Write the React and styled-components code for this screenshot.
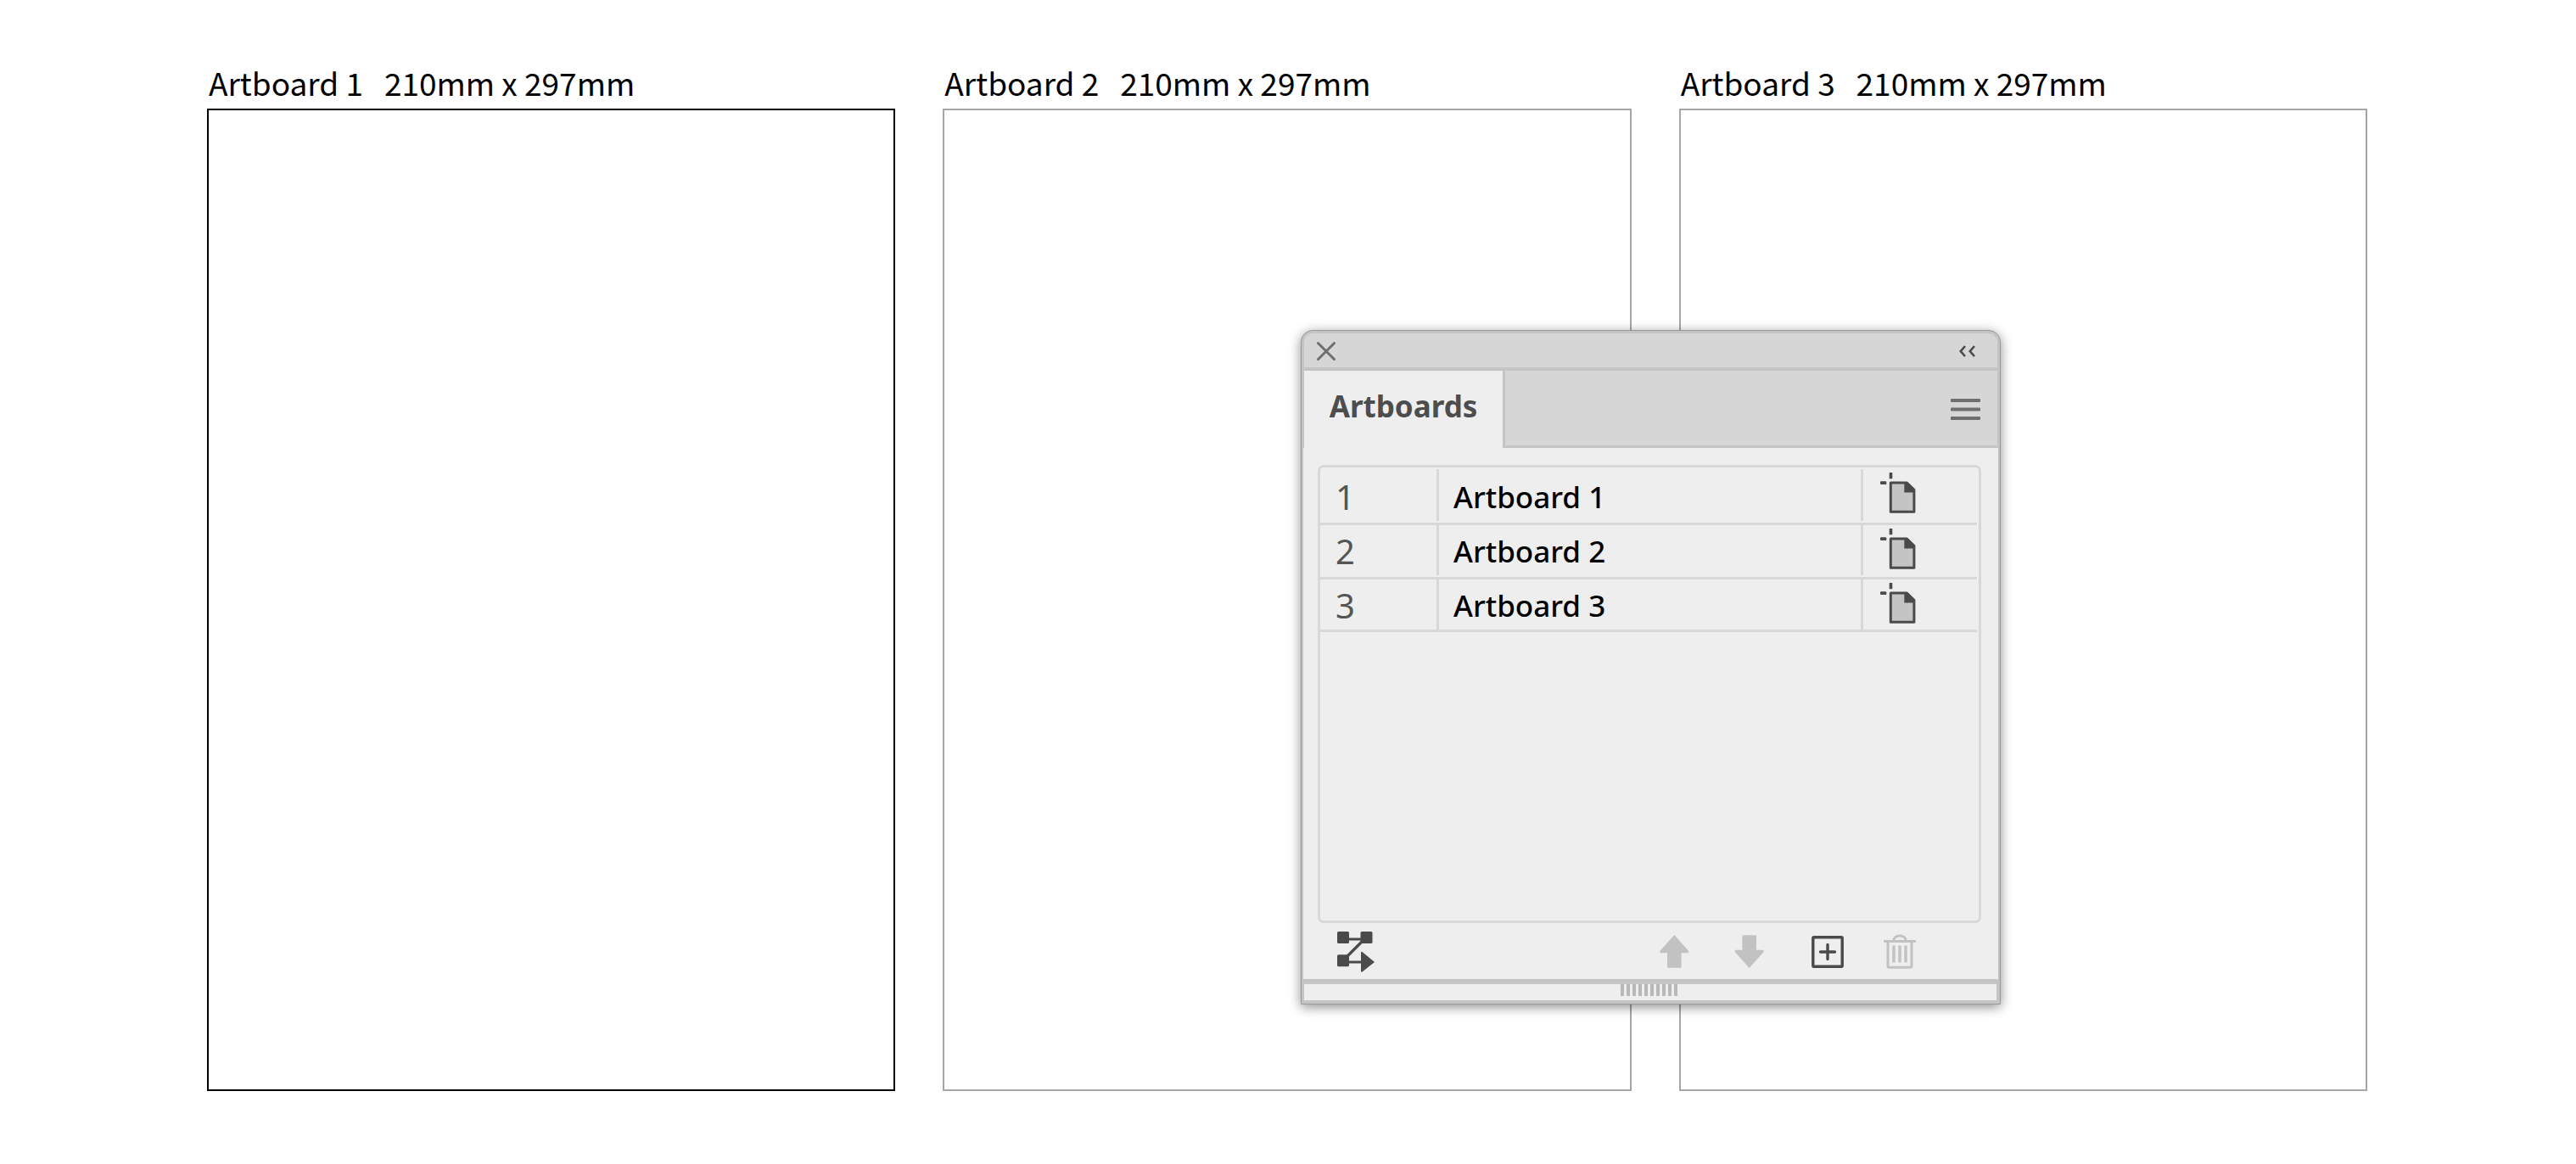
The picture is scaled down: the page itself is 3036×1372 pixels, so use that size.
import React from "react";
import styled, { createGlobalStyle, css } from "styled-components";

const GlobalStyle = createGlobalStyle`
  *, *::before, *::after { box-sizing: border-box; }
  body { margin: 0; background: #fff; }
`;

const labelFont = css`font-family: "Noto Sans CJK JP", "Noto Sans", sans-serif;`;
const uiFont = css`font-family: "Noto Sans", "Open Sans", sans-serif;`;

const Workspace = styled.main`
  position: relative;
  min-height: 100vh;
  padding: 72px 246px 0 244px;
`;

const Boards = styled.div`
  display: grid;
  grid-template-columns: repeat(3, 1fr);
  gap: 56px;
`;

const Board = styled.section`
  display: flex;
  flex-direction: column;
`;

const BoardLabel = styled.h2`
  ${labelFont}
  margin: 0;
  padding-left: 2px;
  height: 56px;
  font-size: 37px;
  font-weight: 400;
  line-height: 50px;
  color: #000;
  white-space: pre;
`;

const Sheet = styled.div`
  aspect-ratio: 811 / 1158;
  border: ${(p) => (p.$active ? "2px solid #000" : "2px solid #a6a6a6")};
`;

const Panel = styled.aside`
  ${uiFont}
  position: absolute;
  top: 389px;
  left: 1533px;
  width: 825px;
  display: flex;
  flex-direction: column;
  background: #c4c4c4;
  border: 1px solid #999;
  border-radius: 14px 14px 0 0;
  box-shadow: 0 3px 14px rgba(0, 0, 0, 0.45);
`;

const TitleBar = styled.header`
  display: flex;
  align-items: center;
  justify-content: space-between;
  height: 40px;
  margin: 3px 3px 4px;
  padding: 1px 26px 0 15px;
  background: #d6d6d6;
  border-radius: 10px 10px 0 0;
`;

const IconButton = styled.button`
  display: flex;
  padding: 0;
  border: 0;
  background: none;
  color: ${(p) => p.$color || "#4a4a4a"};
  svg { display: block; }
`;

const TabRow = styled.div`
  display: flex;
  height: 91px;
  margin: 0 3px;
  background: #d6d6d6;
`;

const Tab = styled.button`
  ${uiFont}
  width: 237px;
  padding: 0 0 8px;
  border: 0;
  border-right: 3px solid #c4c4c4;
  background: #eee;
  color: #4d4d4d;
  font-size: 35px;
  font-weight: 700;
  line-height: 46px;
`;

const TabSpace = styled.div`
  flex: 1;
  display: flex;
  align-items: center;
  justify-content: flex-end;
  padding: 2px 20px 0 0;
  border-bottom: 3px solid #c4c4c4;
`;

const Body = styled.div`
  margin: 0 2px;
  padding: 20px 20px 0 17px;
  background: #eee;
`;

const ListBox = styled.div`
  height: 540px;
  padding: 2px 2px 0 0;
  border: 3px solid #d8d8d8;
  border-radius: 7px;
`;

const List = styled.table`
  width: 100%;
  table-layout: fixed;
  border-collapse: collapse;
`;

const Row = styled.tr`
  height: ${(p) => p.$height}px;
  line-height: ${(p) => p.$line}px;
  background: linear-gradient(#d8d8d8, #d8d8d8) bottom / 100% 3px no-repeat;
`;

const Cell = styled.td`
  padding: 0;
  vertical-align: top;
  font-size: 35px;
  color: #000;
  background: ${(p) =>
    p.$divided
      ? `linear-gradient(#d8d8d8, #d8d8d8) right top / 3px calc(100% - ${p.$stop}px) no-repeat`
      : "none"};
`;

const NumberCell = styled(Cell)`
  width: 140px;
  padding-left: 18px;
  font-size: 40px;
  color: #555;
`;

const NameCell = styled(Cell)`
  padding-left: 17px;
  font-weight: 500;
`;

const IconCell = styled(Cell)`
  width: 134px;
  padding: 4px 0 0 20px;
`;

const Toolbar = styled.footer`
  display: flex;
  align-items: center;
  height: 66px;
  padding: 1px 77px 0 23px;
`;

const Spacer = styled.div`
  flex: 1;
`;

const Tools = styled.div`
  display: flex;
  align-items: center;
  gap: 53px;
`;

const ToolsPair = styled(Tools)`
  gap: 47px;
  margin-left: 3px;
`;

const Grip = styled.div`
  display: flex;
  justify-content: center;
  gap: 3px;
  height: 19px;
  margin: 6px 4px 4px 3px;
  padding-right: 4px;
  background: #eee;
`;

const GripBar = styled.span`
  width: 4px;
  height: 14px;
  background: #b8b8b8;
`;

const CloseIcon = () => (
  <svg width="22" height="22" viewBox="0 0 22 22" fill="none" stroke="currentColor" strokeWidth="3" strokeLinecap="round">
    <path d="M1.5 1.5 20.5 20.5M20.5 1.5 1.5 20.5" />
  </svg>
);

const CollapseIcon = () => (
  <svg width="19" height="14" viewBox="0 0 19 14" fill="none" stroke="currentColor" strokeWidth="2.6">
    <path d="M7 1 1.8 7 7 13M18 1 12.8 7 18 13" />
  </svg>
);

const MenuIcon = () => (
  <svg width="35" height="25" viewBox="0 0 35 25" fill="currentColor">
    <rect width="35" height="4" rx="1" />
    <rect y="10.5" width="35" height="4" rx="1" />
    <rect y="21" width="35" height="4" rx="1" />
  </svg>
);

const ArtboardIcon = () => (
  <svg width="42" height="48" viewBox="0 0 42 48">
    <rect x="10.7" y="0" width="3.6" height="7.3" rx="0.6" fill="#4a4a4a" />
    <rect x="0" y="10.2" width="7.3" height="3.7" rx="1" fill="#4a4a4a" />
    <path d="M12.3 12h19l8.6 8.4v25.8H12.3z" fill="#c4c4c4" stroke="#4a4a4a" strokeWidth="3" strokeLinejoin="round" />
    <path d="M28.3 11v12.4H41v-3.5L31.8 11z" fill="#4a4a4a" />
  </svg>
);

const RearrangeIcon = () => (
  <svg width="45" height="48" viewBox="0 0 45 48" fill="currentColor">
    <path d="M10 9h24M32 9 8 33M10 36h22" stroke="currentColor" strokeWidth="3.2" />
    <rect width="14" height="14" rx="1.5" />
    <rect x="27.5" width="14" height="14" rx="1.5" />
    <rect y="27.3" width="14" height="14" rx="1.5" />
    <path d="M28 24.8q0-1.6 1.5-.8L44 36 29.5 47.6q-1.5.8-1.5-.8z" />
  </svg>
);

const ArrowIcon = ({ down }) => (
  <svg width="35" height="39" viewBox="0 0 35 39" fill="currentColor">
    <path
      d="M17.4 0 34 18.8q1.2 2.2-1 2.4H25.6V37.4q0 1.4-1.4 1.4H10.4Q9 38.8 9 37.4V21.2H1.6q-2.2-.2-1-2.4z"
      transform={down ? "rotate(180 17.5 19.5)" : undefined}
    />
  </svg>
);

const AddIcon = () => (
  <svg width="38" height="38" viewBox="0 0 38 38" fill="none" stroke="currentColor">
    <rect x="1.8" y="1.8" width="34.4" height="34.4" rx="1" strokeWidth="3.4" />
    <path d="M19 10.5v17M10.5 19h17" strokeWidth="3.4" strokeLinecap="round" />
  </svg>
);

const TrashIcon = () => (
  <svg width="38" height="41" viewBox="0 0 38 41" fill="none" stroke="currentColor" strokeWidth="3">
    <path d="M0 8.6h38M11.8 8c0-8 14.4-8 14.4 0M5 9v28.4q0 1.8 1.8 1.8h24.4q1.8 0 1.8-1.8V9" />
    <path d="M12 13.5v20M19 13.5v20M26 13.5v20" strokeWidth="3.4" />
  </svg>
);

const rows = [
  { id: 1, height: 66, line: 66, stop: 5 },
  { id: 2, height: 64, line: 62, stop: 5 },
  { id: 3, height: 62, line: 62, stop: 3 },
];

export default function App() {
  return (
    <>
      <GlobalStyle />
      <Workspace>
        <Boards>
          {rows.map(({ id }) => (
            <Board key={id}>
              <BoardLabel>{`Artboard ${id}   210mm x 297mm`}</BoardLabel>
              <Sheet $active={id === 1} />
            </Board>
          ))}
        </Boards>

        <Panel aria-label="Artboards panel">
          <TitleBar>
            <IconButton aria-label="Close" $color="#6e6e6e"><CloseIcon /></IconButton>
            <IconButton aria-label="Collapse"><CollapseIcon /></IconButton>
          </TitleBar>
          <TabRow>
            <Tab>Artboards</Tab>
            <TabSpace>
              <IconButton aria-label="Panel menu" $color="#6e6e6e"><MenuIcon /></IconButton>
            </TabSpace>
          </TabRow>
          <Body>
            <ListBox>
              <List>
                <tbody>
                  {rows.map(({ id, height, line, stop }) => (
                    <Row key={id} $height={height} $line={line}>
                      <NumberCell $divided $stop={stop}>{id}</NumberCell>
                      <NameCell $divided $stop={stop}>Artboard {id}</NameCell>
                      <IconCell>
                        <IconButton aria-label={`Artboard ${id} options`}><ArtboardIcon /></IconButton>
                      </IconCell>
                    </Row>
                  ))}
                </tbody>
              </List>
            </ListBox>
            <Toolbar>
              <IconButton aria-label="Rearrange all artboards"><RearrangeIcon /></IconButton>
              <Spacer />
              <Tools>
                <Tools>
                  <IconButton aria-label="Move up" $color="#c2c2c2"><ArrowIcon /></IconButton>
                  <IconButton aria-label="Move down" $color="#c2c2c2"><ArrowIcon down /></IconButton>
                </Tools>
                <ToolsPair>
                  <IconButton aria-label="New artboard"><AddIcon /></IconButton>
                  <IconButton aria-label="Delete artboard" $color="#c2c2c2"><TrashIcon /></IconButton>
                </ToolsPair>
              </Tools>
            </Toolbar>
          </Body>
          <Grip>
            {Array.from({ length: 10 }, (_, i) => <GripBar key={i} />)}
          </Grip>
        </Panel>
      </Workspace>
    </>
  );
}
